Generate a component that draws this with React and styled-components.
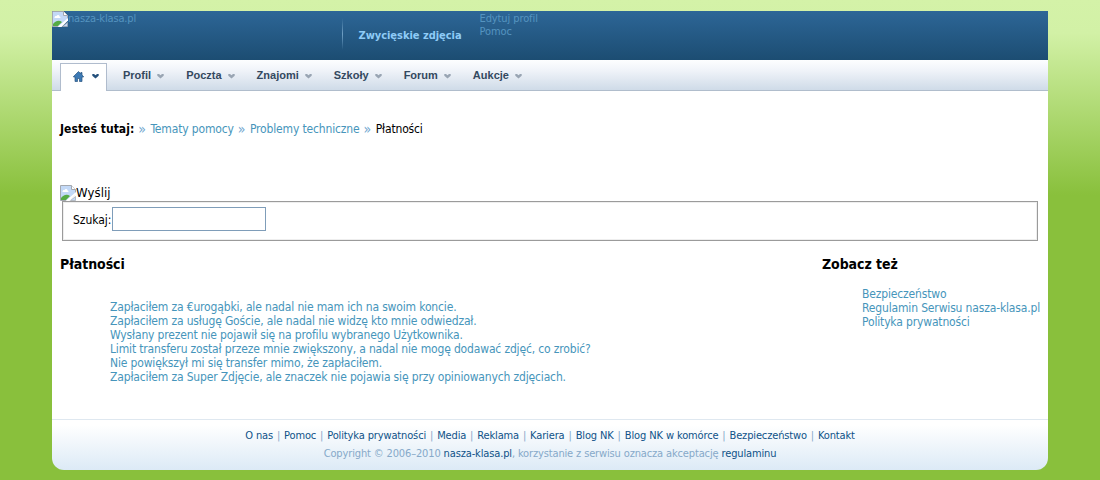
import React from 'react';
import styled, { createGlobalStyle, css } from 'styled-components';

const GlobalStyle = createGlobalStyle`
  html {
    background: #89c03c;
  }

  body {
    margin: 0;
    min-height: 480px;
    background: linear-gradient(#d4f2a8 0, #d2f1a6 33px, #89c03c 195px, #89c03c 100%);
    font-family: 'DejaVu Sans Condensed', 'Noto Sans', sans-serif;
    font-size: 12px;
    line-height: 14px;
    letter-spacing: -0.155px;
    color: #000;
  }
`;

const Page = styled.div`
  box-sizing: border-box;
  display: flex;
  flex-direction: column;
  width: 996px;
  height: 470px;
  margin: 0 auto;
  padding-top: 11px;
`;

const Header = styled.header`
  display: flex;
  height: 49px;
  background: linear-gradient(#2d6697, #1c4d72);
  font-size: 11px;
  line-height: 13px;
  color: #5594c0;
`;

const Logo = styled.a`
  display: flex;
  width: 290px;
  letter-spacing: -0.16px;
  line-height: 15px;
`;

const Divider = styled.div`
  width: 1px;
  height: 32px;
  margin-top: 7px;
  background: linear-gradient(rgba(110, 160, 200, 0), #6f9fc4 50%, rgba(110, 160, 200, 0));
`;

const Winners = styled.a`
  width: 105px;
  margin: 18px 0 0 15.5px;
  font-weight: bold;
  letter-spacing: -0.03px;
  white-space: nowrap;
  color: #8ecbf7;
`;

const Tools = styled.div`
  display: flex;
  flex-direction: column;
  margin: 1px 0 0 16px;
  letter-spacing: -0.1px;
`;

const Nav = styled.nav`
  box-sizing: border-box;
  display: flex;
  height: 31px;
  padding: 3px 8px 0;
  border-bottom: 1px solid #b0bdcc;
  background: linear-gradient(#fdfeff, #f2f5fa 30%, #cfdbe8);
`;

const HomeTab = styled.a`
  box-sizing: border-box;
  display: flex;
  align-items: flex-start;
  width: 47px;
  height: 28px;
  padding: 7px 0 0 12px;
  gap: 8px;
  border: 1px solid #b0bccd;
  border-bottom: 0;
  background: #fff;

  svg:last-child {
    margin-top: 3px;
  }
`;

const Menu = styled.div`
  display: flex;
  gap: 22px;
  margin-left: 16px;
`;

const MenuItem = styled.a`
  display: flex;
  align-items: flex-start;
  gap: 6px;
  padding-top: 5px;
  font: bold 11px/14px 'Liberation Sans', Arial, sans-serif;
  letter-spacing: 0;
  color: #34495f;

  svg {
    margin-top: 6px;
  }
`;

const Content = styled.main`
  flex: 1;
  padding: 31px 8px 0;
  background: #fff;
`;

const link = css`
  color: #4695bb;
  text-decoration: none;
`;

const Link = styled.a`
  ${link};
`;

const Breadcrumbs = styled.div`
  display: flex;
  white-space: pre;

  strong {
    letter-spacing: 0.04px;
  }
`;

const Arrow = styled.span`
  width: 8.500px;
  margin: 0 3.700px 0 4px;
  font-size: 14px;
  letter-spacing: 0;
  color: #6fa6cf;
`;

const Submit = styled.div`
  display: flex;
  height: 16px;
  margin-top: 49px;
  font-size: 13px;
  line-height: 16px;
  letter-spacing: 0.1px;
`;

const Fieldset = styled.fieldset`
  box-sizing: border-box;
  display: flex;
  height: 40px;
  min-width: 0;
  margin: 0 2px;
  padding: 5px 10px 0;
  border: 1px solid #9b9b9b;
  outline: 0;
  box-shadow: inset 1px 1px 0 #eee, inset -1px -1px 0 #eee;
`;

const Label = styled.label`
  width: 39px;
  padding-top: 6px;
  white-space: nowrap;
  letter-spacing: -0.05px;
`;

const Input = styled.input`
  box-sizing: border-box;
  width: 154px;
  height: 24px;
  margin: 0;
  padding: 2px;
  border: 1px solid #7f9db9;
  background: #fff;
`;

const Columns = styled.div`
  display: flex;
  margin-top: 15px;
`;

const Column = styled.section`
  width: ${(p) => p.$width}px;
`;

const Heading = styled.h2`
  margin: 0;
  font-size: 14px;
  line-height: 17px;
  letter-spacing: -0.07px;
`;

const List = styled.ul`
  margin: ${(p) => p.$top}px 0 0;
  padding: 0 0 0 ${(p) => p.$indent}px;
  list-style: none;
  white-space: nowrap;
`;

const Footer = styled.footer`
  box-sizing: border-box;
  height: 51px;
  padding-top: 7px;
  border-top: 1px solid #dfe8f0;
  border-radius: 0 0 12px 12px;
  background: linear-gradient(#fff 10%, #dceaf6);
  font-size: 11px;
  line-height: 18px;
  letter-spacing: -0.14px;
  text-align: center;
  color: #86a9c9;

  a {
    color: #0f5288;
  }
`;

const FooterLinks = styled.div`
  word-spacing: 0.1px;
`;

const Separator = styled.span`
  margin: 0 0.85px;
`;

const BrokenImage = () => (
  <svg width="16" height="16" viewBox="0 0 16 16">
    <path d="M.5.5h11l4 4v5L9 15.500H.5z" fill="#c3d9f7" stroke="#a4a9b0" />
    <path d="M2.500 6.500c0-1.200 1-1.800 2-1.500.5-1.500 3-1.300 3 .5 1 0 1.200 1 .8 1.500H2.500z" fill="#fff" />
    <path d="M1 15v-2c2-3 6-4.500 9-2l-4 4z" fill="#56ab45" />
    <path d="M16 7v2.500L9.500 16H5.500z" fill="#fff" />
    <path d="M10.500 15.500l5-4v4z" fill="#c3d9f7" stroke="#a4a9b0" strokeWidth=".7" />
    <path d="M11.500.5v4h4" fill="#fff" stroke="#a4a9b0" />
  </svg>
);

const HomeIcon = () => (
  <svg width="11" height="11" viewBox="0 0 11 11">
    <path
      d="M5.500.5L.5 5.500v.5H2v4.500h2.500V7.500h2v3H9V6h1.500v-.5L9 4V1.500H7.800V2.800z"
      fill="#3d7ab5"
      stroke="#2a5480"
      strokeWidth=".7"
    />
  </svg>
);

const Chevron = ({ color }) => (
  <svg width="7" height="5" viewBox="0 0 7 5">
    <path d="M.3 0h1.700l1.500 1.200L5 0h1.700v1.700L3.500 4.500.3 1.700z" fill={color} />
  </svg>
);

const menu = ['Profil', 'Poczta', 'Znajomi', 'Szkoły', 'Forum', 'Aukcje'];

const topics = [
  'Zapłaciłem za €urogąbki, ale nadal nie mam ich na swoim koncie.',
  'Zapłaciłem za usługę Goście, ale nadal nie widzę kto mnie odwiedzał.',
  'Wysłany prezent nie pojawił się na profilu wybranego Użytkownika.',
  'Limit transferu został przeze mnie zwiększony, a nadal nie mogę dodawać zdjęć, co zrobić?',
  'Nie powiększył mi się transfer mimo, że zapłaciłem.',
  'Zapłaciłem za Super Zdjęcie, ale znaczek nie pojawia się przy opiniowanych zdjęciach.',
];

const related = ['Bezpieczeństwo', 'Regulamin Serwisu nasza-klasa.pl', 'Polityka prywatności'];

const footerLinks = [
  'O nas',
  'Pomoc',
  'Polityka prywatności',
  'Media',
  'Reklama',
  'Kariera',
  'Blog NK',
  'Blog NK w komórce',
  'Bezpieczeństwo',
  'Kontakt',
];

const LinkList = ({ items, top, indent }) => (
  <List $top={top} $indent={indent}>
    {items.map((item) => (
      <li key={item}>
        <Link>{item}</Link>
      </li>
    ))}
  </List>
);

export default () => {
  return (
    <>
      <GlobalStyle />
      <Page>
        <Header>
          <Logo>
            <BrokenImage />
            nasza-klasa.pl
          </Logo>
          <Divider />
          <Winners>Zwycięskie zdjęcia</Winners>
          <Tools>
            <a>Edytuj profil</a>
            <a>Pomoc</a>
          </Tools>
        </Header>
        <Nav>
          <HomeTab>
            <HomeIcon />
            <Chevron color="#24507c" />
          </HomeTab>
          <Menu>
            {menu.map((item) => (
              <MenuItem key={item}>
                {item}
                <Chevron color="#99a5b3" />
              </MenuItem>
            ))}
          </Menu>
        </Nav>
        <Content>
          <Breadcrumbs>
            <strong>Jesteś tutaj:</strong>
            <Arrow>»</Arrow>
            <Link>Tematy pomocy</Link>
            <Arrow>»</Arrow>
            <Link>Problemy techniczne</Link>
            <Arrow>»</Arrow>
            Płatności
          </Breadcrumbs>
          <Submit>
            <BrokenImage />
            Wyślij
          </Submit>
          <Fieldset>
            <Label htmlFor="search">Szukaj:</Label>
            <Input id="search" type="text" />
          </Fieldset>
          <Columns>
            <Column $width={762}>
              <Heading>Płatności</Heading>
              <LinkList items={topics} top={27} indent={50} />
            </Column>
            <Column $width={218}>
              <Heading>Zobacz też</Heading>
              <LinkList items={related} top={14} indent={40} />
            </Column>
          </Columns>
        </Content>
        <Footer>
          <FooterLinks>
            {footerLinks.map((item, i) => (
              <React.Fragment key={item}>
                {i > 0 && <Separator> | </Separator>}
                <a>{item}</a>
              </React.Fragment>
            ))}
          </FooterLinks>
          <div>
            Copyright © 2006–2010 <a>nasza-klasa.pl</a>, korzystanie z serwisu oznacza akceptację{' '}
            <a>regulaminu</a>
          </div>
        </Footer>
      </Page>
    </>
  );
};
